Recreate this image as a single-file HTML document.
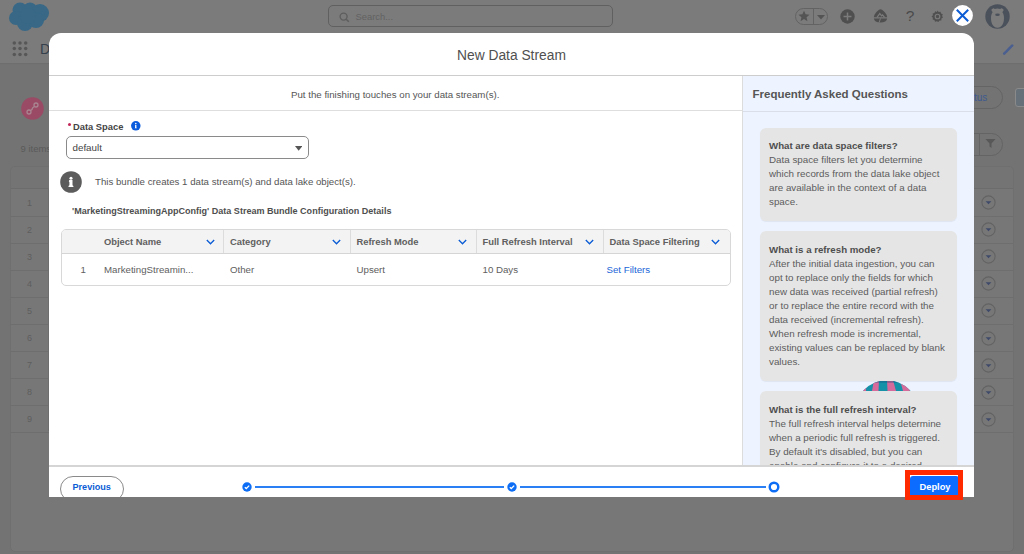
<!DOCTYPE html>
<html><head><meta charset="utf-8">
<style>
*{box-sizing:border-box;margin:0;padding:0}
html,body{width:1024px;height:554px;overflow:hidden;font-family:"Liberation Sans",sans-serif;background:#f3f3f3;position:relative}
.a{position:absolute;white-space:nowrap}
#page{position:absolute;left:0;top:0;width:1024px;height:554px;background:#737373}
#topbar{position:absolute;left:0;top:0;width:1024px;height:33px;background:#7b7b7b}
#navbar{position:absolute;left:0;top:33px;width:1024px;height:30px;background:#7b7b7b;box-shadow:0 0.5px 1.5px rgba(0,0,0,0.12)}
#modal{position:absolute;left:0;top:0;width:1024px;height:554px;clip-path:inset(33px 50px 57px 49px round 12px 12px 0 0)}
#mbg{position:absolute;left:49px;top:33px;width:925px;height:464px;background:#fff}
.hl{position:absolute;background:#d9d9d9}
#faq{position:absolute;left:742px;top:76px;width:232px;height:390px;background:#eef4ff;border-left:1px solid #dcdcdc}
.card{position:absolute;left:760px;width:197px;background:#e5e5e5;border-radius:6px;box-shadow:0 1px 1px rgba(0,0,0,0.06)}
.ct{position:absolute;left:769px;font-size:9.8px;line-height:14px;color:#5c5c5c;white-space:nowrap}
.ct b{color:#4e4e4e;font-size:9.7px}
#foot{position:absolute;left:49px;top:465px;width:925px;height:40px;background:#fff;border-top:2px solid #d5d5d5}
.th{position:absolute;top:229px;height:25px;font-size:9.4px;font-weight:bold;color:#606060;line-height:25px}
.chev{position:absolute;top:239px;width:9px;height:6px}
.td{position:absolute;top:263px;font-size:9.7px;color:#5e5e5e;line-height:14px}
</style></head><body>
<div id="page"></div>
<div id="topbar"></div>
<div id="navbar"></div>
<!-- salesforce cloud -->
<svg class="a" style="left:8px;top:1px" width="43" height="31" viewBox="0 0 43 31">
  <g fill="#386886">
    <circle cx="12" cy="9" r="7.5"/><circle cx="22" cy="8.5" r="7"/><circle cx="32" cy="12" r="9"/>
    <circle cx="8" cy="17" r="7"/><circle cx="17" cy="22" r="8"/><circle cx="28" cy="19" r="8"/><circle cx="20" cy="15" r="8"/>
  </g>
</svg>
<!-- search -->
<div class="a" style="left:327.5px;top:5px;width:285.5px;height:22.3px;border:1.3px solid #606060;border-radius:5px"></div>
<svg class="a" style="left:339px;top:12px" width="11" height="11" viewBox="0 0 11 11"><circle cx="4.6" cy="4.6" r="3.5" fill="none" stroke="#5e5e5e" stroke-width="1.4"/><path d="M7.2 7.2L9.8 9.8" stroke="#5e5e5e" stroke-width="1.6"/></svg>
<div class="a" style="left:355.5px;top:10px;font-size:9.4px;color:#626262;line-height:14px">Search...</div>
<!-- favorites -->
<div class="a" style="left:795px;top:8px;width:33px;height:16.5px;border:1.2px solid #636363;border-radius:8.5px"></div>
<div class="a" style="left:812.5px;top:8.5px;width:1.2px;height:15.5px;background:#636363"></div>
<svg class="a" style="left:798px;top:10px" width="12" height="12" viewBox="0 0 24 24"><path d="M12 1.5l3.2 7.2 7.8.7-5.9 5.2 1.8 7.7L12 18.2l-6.9 4.1 1.8-7.7L1 9.4l7.8-.7z" fill="#545454"/></svg>
<svg class="a" style="left:817px;top:15px" width="8" height="5" viewBox="0 0 8 5"><path d="M0 0h8L4 4.5z" fill="#545454"/></svg>
<!-- plus -->
<svg class="a" style="left:839.5px;top:8.8px" width="15" height="15" viewBox="0 0 15 15"><circle cx="7.5" cy="7.5" r="7.2" fill="#4f4f4f"/><path d="M7.5 3.5v8M3.5 7.5h8" stroke="#7b7b7b" stroke-width="1.5"/></svg>
<!-- trailhead -->
<svg class="a" style="left:872.5px;top:9px" width="15" height="14" viewBox="0 0 15 14"><path d="M7.5 0.3C9.5 0.3 14 5 14.2 8.3L0.8 8.3C1 5 5.5 0.3 7.5 0.3z" fill="#4f4f4f"/><path d="M0.9 9.6L14.1 9.6C13.8 12 11.5 13.6 7.5 13.6C3.5 13.6 1.2 12 0.9 9.6z" fill="#4f4f4f"/><path d="M4 8.4L6.8 4.6L8.6 6.8L9.6 5.8L11.5 8.4" fill="none" stroke="#7b7b7b" stroke-width="1.2"/><path d="M7.5 9.4L6 13.8" stroke="#7b7b7b" stroke-width="1"/></svg>
<!-- help -->
<div class="a" style="left:905.8px;top:7px;font-size:15.5px;color:#4a4a4a;line-height:18px">?</div>
<!-- gear -->
<svg class="a" style="left:930.5px;top:9.5px" width="13" height="13" viewBox="0 0 24 24"><path d="M12 1l2.2 2.6 3.4-.6.9 3.3 3.2 1.4-1.2 3.2 1.6 3-2.9 1.9-.1 3.4-3.4.1-1.9 2.9-3-1.6-3.2 1.2-1.4-3.2-3.3-.9.6-3.4L1 12l2.6-2.2-.6-3.4 3.3-.9 1.4-3.2 3.2 1.2z" fill="#505050"/><circle cx="12" cy="12" r="4.2" fill="none" stroke="#7b7b7b" stroke-width="2.2"/></svg>
<!-- avatar -->
<svg class="a" style="left:984.5px;top:3.5px" width="25" height="25" viewBox="0 0 25 25"><circle cx="12.5" cy="12.5" r="12.2" fill="#4b515b"/><path d="M6.5 5.5a2 2 0 0 1 3.2-.6 9 9 0 0 1 5.6 0 2 2 0 0 1 3.2.6 2.5 2.5 0 0 1-1.2 2.6c1.1 1.6 1.7 3.6 1.7 6.2 0 4-1.6 9.5-6.5 9.5S6 18.3 6 14.3c0-2.6.6-4.6 1.7-6.2A2.5 2.5 0 0 1 6.5 5.5z" fill="#7c7c7c"/><ellipse cx="12.5" cy="10.8" rx="2.3" ry="1.3" fill="#4b515b"/></svg>
<!-- nav -->
<svg class="a" style="left:12px;top:41px" width="17" height="17" viewBox="0 0 17 17"><g fill="#575757"><circle cx="2.3" cy="2" r="1.75"/><circle cx="8" cy="2" r="1.75"/><circle cx="13.7" cy="2" r="1.75"/><circle cx="2.3" cy="7.6" r="1.75"/><circle cx="8" cy="7.6" r="1.75"/><circle cx="13.7" cy="7.6" r="1.75"/><circle cx="2.3" cy="13.5" r="1.75"/><circle cx="8" cy="13.5" r="1.75"/><circle cx="13.7" cy="13.5" r="1.75"/></g></svg>
<div class="a" style="left:40px;top:40px;font-size:14px;color:#36404c;line-height:18px">D</div>
<svg class="a" style="left:1002px;top:44px" width="12" height="12" viewBox="0 0 12 12"><g stroke="#4a5f90" stroke-width="2.6" stroke-linecap="round"><path d="M2.2 9.6L2.8 9"/><path d="M4 7.8L8.6 3.2"/><path d="M9.6 2.2L10.2 1.6"/></g></svg>
<!-- page header -->
<svg class="a" style="left:21px;top:97px" width="23" height="23" viewBox="0 0 23 23"><circle cx="11.5" cy="11.5" r="11.3" fill="#9a4a64"/><g fill="none" stroke="#a88590" stroke-width="1.3"><circle cx="8" cy="15" r="2"/><circle cx="15" cy="8" r="2"/><path d="M9.5 13.5l1.5-1 .5-1.5 1-1 1.5-.5"/></g></svg>
<div class="a" style="left:20.5px;top:142px;font-size:9.5px;color:#5a5a5a;line-height:14px">9 items</div>
<div class="a" style="left:946px;top:86px;width:56.5px;height:23px;border:1.2px solid #646464;border-radius:12px"></div>
<div class="a" style="left:974px;top:91px;font-size:10px;color:#3f5a90;line-height:14px">tus</div>
<div class="a" style="left:1014.5px;top:88px;width:12px;height:19px;border:1px solid #8a8a8a;border-radius:3px;background:#667078"></div>
<div class="a" style="left:940px;top:132.5px;width:62.5px;height:23.5px;border:1.2px solid #646464;border-radius:12px"></div>
<div class="a" style="left:978.5px;top:133px;width:1.2px;height:22.5px;background:#646464"></div>
<svg class="a" style="left:985px;top:138px" width="11" height="11" viewBox="0 0 11 11"><path d="M0.5 1h10L6.5 5.5v4.5L4.5 8.5V5.5z" fill="#585858"/></svg>
<!-- bg table -->
<div class="a" style="left:9.5px;top:166px;width:1004px;height:386px;background:#777;border:1px solid #6f6f6f;border-radius:5px;overflow:hidden">
  <div style="position:absolute;left:0;top:0;width:1004px;height:22px;background:#747474;border-bottom:1px solid #6c6c6c"></div>
</div>
<div class="a" style="left:10px;top:215.6px;width:1003px;height:1px;background:#6e6e6e"></div>
<div class="a" style="left:27px;top:195.5px;font-size:9px;color:#5e5e5e;line-height:14px">1</div>
<svg class="a" style="left:981px;top:195.0px" width="15" height="15" viewBox="0 0 15 15"><circle cx="7.5" cy="7.5" r="6.6" fill="none" stroke="#636363" stroke-width="1.1"/><path d="M4.6 6.3h5.8L7.5 9.3z" fill="#3f4a6a"/></svg>
<div class="a" style="left:10px;top:242.7px;width:1003px;height:1px;background:#6e6e6e"></div>
<div class="a" style="left:27px;top:222.6px;font-size:9px;color:#5e5e5e;line-height:14px">2</div>
<svg class="a" style="left:981px;top:222.1px" width="15" height="15" viewBox="0 0 15 15"><circle cx="7.5" cy="7.5" r="6.6" fill="none" stroke="#636363" stroke-width="1.1"/><path d="M4.6 6.3h5.8L7.5 9.3z" fill="#3f4a6a"/></svg>
<div class="a" style="left:10px;top:269.8px;width:1003px;height:1px;background:#6e6e6e"></div>
<div class="a" style="left:27px;top:249.7px;font-size:9px;color:#5e5e5e;line-height:14px">3</div>
<svg class="a" style="left:981px;top:249.2px" width="15" height="15" viewBox="0 0 15 15"><circle cx="7.5" cy="7.5" r="6.6" fill="none" stroke="#636363" stroke-width="1.1"/><path d="M4.6 6.3h5.8L7.5 9.3z" fill="#3f4a6a"/></svg>
<div class="a" style="left:10px;top:296.9px;width:1003px;height:1px;background:#6e6e6e"></div>
<div class="a" style="left:27px;top:276.8px;font-size:9px;color:#5e5e5e;line-height:14px">4</div>
<svg class="a" style="left:981px;top:276.3px" width="15" height="15" viewBox="0 0 15 15"><circle cx="7.5" cy="7.5" r="6.6" fill="none" stroke="#636363" stroke-width="1.1"/><path d="M4.6 6.3h5.8L7.5 9.3z" fill="#3f4a6a"/></svg>
<div class="a" style="left:10px;top:324.0px;width:1003px;height:1px;background:#6e6e6e"></div>
<div class="a" style="left:27px;top:303.9px;font-size:9px;color:#5e5e5e;line-height:14px">5</div>
<svg class="a" style="left:981px;top:303.4px" width="15" height="15" viewBox="0 0 15 15"><circle cx="7.5" cy="7.5" r="6.6" fill="none" stroke="#636363" stroke-width="1.1"/><path d="M4.6 6.3h5.8L7.5 9.3z" fill="#3f4a6a"/></svg>
<div class="a" style="left:10px;top:351.1px;width:1003px;height:1px;background:#6e6e6e"></div>
<div class="a" style="left:27px;top:331.0px;font-size:9px;color:#5e5e5e;line-height:14px">6</div>
<svg class="a" style="left:981px;top:330.5px" width="15" height="15" viewBox="0 0 15 15"><circle cx="7.5" cy="7.5" r="6.6" fill="none" stroke="#636363" stroke-width="1.1"/><path d="M4.6 6.3h5.8L7.5 9.3z" fill="#3f4a6a"/></svg>
<div class="a" style="left:10px;top:378.2px;width:1003px;height:1px;background:#6e6e6e"></div>
<div class="a" style="left:27px;top:358.1px;font-size:9px;color:#5e5e5e;line-height:14px">7</div>
<svg class="a" style="left:981px;top:357.6px" width="15" height="15" viewBox="0 0 15 15"><circle cx="7.5" cy="7.5" r="6.6" fill="none" stroke="#636363" stroke-width="1.1"/><path d="M4.6 6.3h5.8L7.5 9.3z" fill="#3f4a6a"/></svg>
<div class="a" style="left:10px;top:405.3px;width:1003px;height:1px;background:#6e6e6e"></div>
<div class="a" style="left:27px;top:385.2px;font-size:9px;color:#5e5e5e;line-height:14px">8</div>
<svg class="a" style="left:981px;top:384.7px" width="15" height="15" viewBox="0 0 15 15"><circle cx="7.5" cy="7.5" r="6.6" fill="none" stroke="#636363" stroke-width="1.1"/><path d="M4.6 6.3h5.8L7.5 9.3z" fill="#3f4a6a"/></svg>
<div class="a" style="left:10px;top:432.4px;width:1003px;height:1px;background:#6e6e6e"></div>
<div class="a" style="left:27px;top:412.3px;font-size:9px;color:#5e5e5e;line-height:14px">9</div>
<svg class="a" style="left:981px;top:411.8px" width="15" height="15" viewBox="0 0 15 15"><circle cx="7.5" cy="7.5" r="6.6" fill="none" stroke="#636363" stroke-width="1.1"/><path d="M4.6 6.3h5.8L7.5 9.3z" fill="#3f4a6a"/></svg>
<div class="a" style="left:47.5px;top:188px;width:1px;height:243px;background:#6e6e6e"></div>
<div class="a" style="left:1012.5px;top:188px;width:1px;height:0px;background:#6e6e6e"></div>
<div id="modal">
  <div id="mbg"></div>
  <!-- header -->
  <div class="a" style="left:457px;top:47px;font-size:13.8px;color:#505050;line-height:18px">New Data Stream</div>
  <div class="hl" style="left:49px;top:75.3px;width:925px;height:1.2px;background:#cdcdcd"></div>
  <!-- subheader -->
  <div class="a" style="left:291px;top:88px;font-size:9.7px;color:#555;line-height:14px">Put the finishing touches on your data stream(s).</div>
  <div class="hl" style="left:49px;top:110px;width:693px;height:1px;background:#dedede"></div>

  <!-- data space -->
  <div class="a" style="left:68px;top:123px;width:3px;height:3px;border-radius:50%;background:#c2285a"></div>
  <div class="a" style="left:73px;top:120.8px;font-size:9.35px;font-weight:bold;color:#444;line-height:13px">Data Space</div>
  <svg class="a" style="left:130.8px;top:121px" width="10" height="10" viewBox="0 0 10 10"><circle cx="4.8" cy="4.8" r="4.75" fill="#0b5cdc"/><circle cx="4.8" cy="2.6" r="0.8" fill="#fff"/><path d="M4.1 3.9h1.3v2.6l0.4 0.4v0.4H3.8v-0.4l0.3-0.4z" fill="#fff"/></svg>
  <div class="a" style="left:65.5px;top:136px;width:243.3px;height:23px;border:1px solid #8a8a8a;border-radius:5px;background:#fff"></div>
  <div class="a" style="left:72.5px;top:141px;font-size:9.8px;color:#444;line-height:14px">default</div>
  <svg class="a" style="left:294.8px;top:146.3px" width="7.4" height="5" viewBox="0 0 7.4 5"><path d="M0 0h7.4L3.7 4.8z" fill="#555"/></svg>

  <!-- info -->
  <svg class="a" style="left:60.3px;top:170.5px" width="22" height="22" viewBox="0 0 22 22"><circle cx="11" cy="11" r="10.8" fill="#5c5c5c"/><circle cx="11" cy="7.2" r="1.55" fill="#fff"/><path d="M9.3 9.1h3.2v5.2l0.9 0.6v1.2H8.5v-1.2l0.9-0.6v-3.3l-0.6-0.6z" fill="#fff"/></svg>
  <div class="a" style="left:95px;top:175px;font-size:9.68px;color:#555;line-height:14px">This bundle creates 1 data stream(s) and data lake object(s).</div>
  <div class="a" style="left:72px;top:204px;font-size:9.04px;font-weight:bold;color:#4e4e4e;line-height:14px">'MarketingStreamingAppConfig' Data Stream Bundle Configuration Details</div>

  <!-- table -->
  <div class="a" style="left:60.5px;top:229px;width:670.3px;height:56.6px;border:1px solid #d8d8d8;border-radius:5px;background:#fff;overflow:hidden">
    <div style="position:absolute;left:0;top:0;width:671px;height:24px;background:#f3f3f3;border-bottom:1.5px solid #d5d5d5"></div>
  </div>
  <div class="hl" style="left:223px;top:230px;width:1px;height:23px;background:#dcdcdc"></div>
  <div class="hl" style="left:350px;top:230px;width:1px;height:23px;background:#dcdcdc"></div>
  <div class="hl" style="left:476px;top:230px;width:1px;height:23px;background:#dcdcdc"></div>
  <div class="hl" style="left:603px;top:230px;width:1px;height:23px;background:#dcdcdc"></div>
  <div class="th" style="left:104px">Object Name</div>
  <div class="th" style="left:230px">Category</div>
  <div class="th" style="left:356.5px">Refresh Mode</div>
  <div class="th" style="left:482.5px">Full Refresh Interval</div>
  <div class="th" style="left:609.5px">Data Space Filtering</div>
  <svg class="chev" style="left:205.5px" viewBox="0 0 9 6"><path d="M0.8 1L4.5 4.8L8.2 1" fill="none" stroke="#0b5cd5" stroke-width="1.3"/></svg>
  <svg class="chev" style="left:332px" viewBox="0 0 9 6"><path d="M0.8 1L4.5 4.8L8.2 1" fill="none" stroke="#0b5cd5" stroke-width="1.3"/></svg>
  <svg class="chev" style="left:458px" viewBox="0 0 9 6"><path d="M0.8 1L4.5 4.8L8.2 1" fill="none" stroke="#0b5cd5" stroke-width="1.3"/></svg>
  <svg class="chev" style="left:585px" viewBox="0 0 9 6"><path d="M0.8 1L4.5 4.8L8.2 1" fill="none" stroke="#0b5cd5" stroke-width="1.3"/></svg>
  <svg class="chev" style="left:711px" viewBox="0 0 9 6"><path d="M0.8 1L4.5 4.8L8.2 1" fill="none" stroke="#0b5cd5" stroke-width="1.3"/></svg>
  <div class="td" style="left:80.5px">1</div>
  <div class="td" style="left:104px">MarketingStreamin...</div>
  <div class="td" style="left:230px">Other</div>
  <div class="td" style="left:356.5px">Upsert</div>
  <div class="td" style="left:482.5px">10 Days</div>
  <div class="td" style="left:606.5px;color:#1b66d8">Set Filters</div>

  <!-- FAQ -->
  <div id="faq"></div>
  <div class="a" style="left:752.5px;top:87px;font-size:11.5px;font-weight:bold;color:#555;line-height:14px">Frequently Asked Questions</div>
  <div class="hl" style="left:743px;top:110.5px;width:231px;height:1px;background:#d9dee8"></div>
  <div class="card" style="top:127.5px;height:93px"></div>
  <div class="ct" style="top:139px"><b>What are data space filters?</b><br>Data space filters let you determine<br>which records from the data lake object<br>are available in the context of a data<br>space.</div>
  <svg class="a" style="left:862px;top:380px" width="50" height="11" viewBox="0 0 50 11">
    <defs><clipPath id="bc"><circle cx="24.8" cy="32.3" r="32"/></clipPath></defs>
    <g clip-path="url(#bc)">
      <rect x="0" y="0" width="50" height="11" fill="#1591a8"/>
      <path d="M0 11L1 0H4.5L4 11z" fill="#d66a9a"/>
      <path d="M10 11L12 0H17L16.5 11z" fill="#d66a9a"/>
      <path d="M25.5 11L25 0H31L34 11z" fill="#d66a9a"/>
      <path d="M41 11L38 0H44L48 11z" fill="#d66a9a"/>
      <rect x="0" y="0" width="50" height="3" fill="#1d5a8c" opacity="0.35"/>
    </g>
  </svg>
  <div class="card" style="top:230.5px;height:150px"></div>
  <div class="ct" style="top:243px"><b>What is a refresh mode?</b><br>After the initial data ingestion, you can<br>opt to replace only the fields for which<br>new data was received (partial refresh)<br>or to replace the entire record with the<br>data received (incremental refresh).<br>When refresh mode is incremental,<br>existing values can be replaced by blank<br>values.</div>
  
  <div class="card" style="top:390.5px;height:120px"></div>
  <div class="ct" style="top:403px"><b>What is the full refresh interval?</b><br>The full refresh interval helps determine<br>when a periodic full refresh is triggered.<br>By default it's disabled, but you can<br>enable and configure it to a desired</div>

  <!-- footer -->
  <div id="foot"></div>
  <div class="a" style="left:60px;top:475.5px;width:64px;height:26px;border:1px solid #8a8a8a;border-radius:13px;background:#fff"></div>
  <div class="a" style="left:72.5px;top:480px;font-size:9.1px;font-weight:bold;color:#0b5cd5;line-height:14px">Previous</div>
  <div class="hl" style="left:255px;top:486px;width:249px;height:2px;background:#2b7ff5"></div>
  <div class="hl" style="left:519.5px;top:486px;width:246px;height:2px;background:#2b7ff5"></div>
  <svg class="a" style="left:242px;top:482px" width="10" height="10" viewBox="0 0 10 10"><circle cx="5" cy="5" r="4.7" fill="#0d6ef5"/><path d="M2.8 5.2L4.3 6.5L7.2 3.6" fill="none" stroke="#fff" stroke-width="1.3"/></svg>
  <svg class="a" style="left:506.5px;top:482px" width="10" height="10" viewBox="0 0 10 10"><circle cx="5" cy="5" r="4.7" fill="#0d6ef5"/><path d="M2.8 5.2L4.3 6.5L7.2 3.6" fill="none" stroke="#fff" stroke-width="1.3"/></svg>
  <svg class="a" style="left:768px;top:481px" width="12" height="12" viewBox="0 0 12 12"><circle cx="6" cy="6" r="4.3" fill="#fff" stroke="#0d6ef5" stroke-width="2.4"/></svg>
  <div class="a" style="left:909.5px;top:475.6px;width:49.5px;height:23px;background:#0b6cff;border-radius:3px"></div>
  <div class="a" style="left:919.5px;top:479.8px;font-size:9.3px;font-weight:bold;color:#fff;line-height:14px">Deploy</div>
</div>
<svg class="a" style="left:952px;top:5px" width="21" height="21" viewBox="0 0 21 21"><circle cx="10.5" cy="10.5" r="10.4" fill="#fff"/><path d="M4.8 4.8L16.2 16.2M16.2 4.8L4.8 16.2" stroke="#0b5cd5" stroke-width="2"/></svg>
<!-- red highlight -->
<div class="a" style="left:905px;top:470.2px;width:58px;height:30.2px;border:5.2px solid #ff2a00"></div>
</body></html>
